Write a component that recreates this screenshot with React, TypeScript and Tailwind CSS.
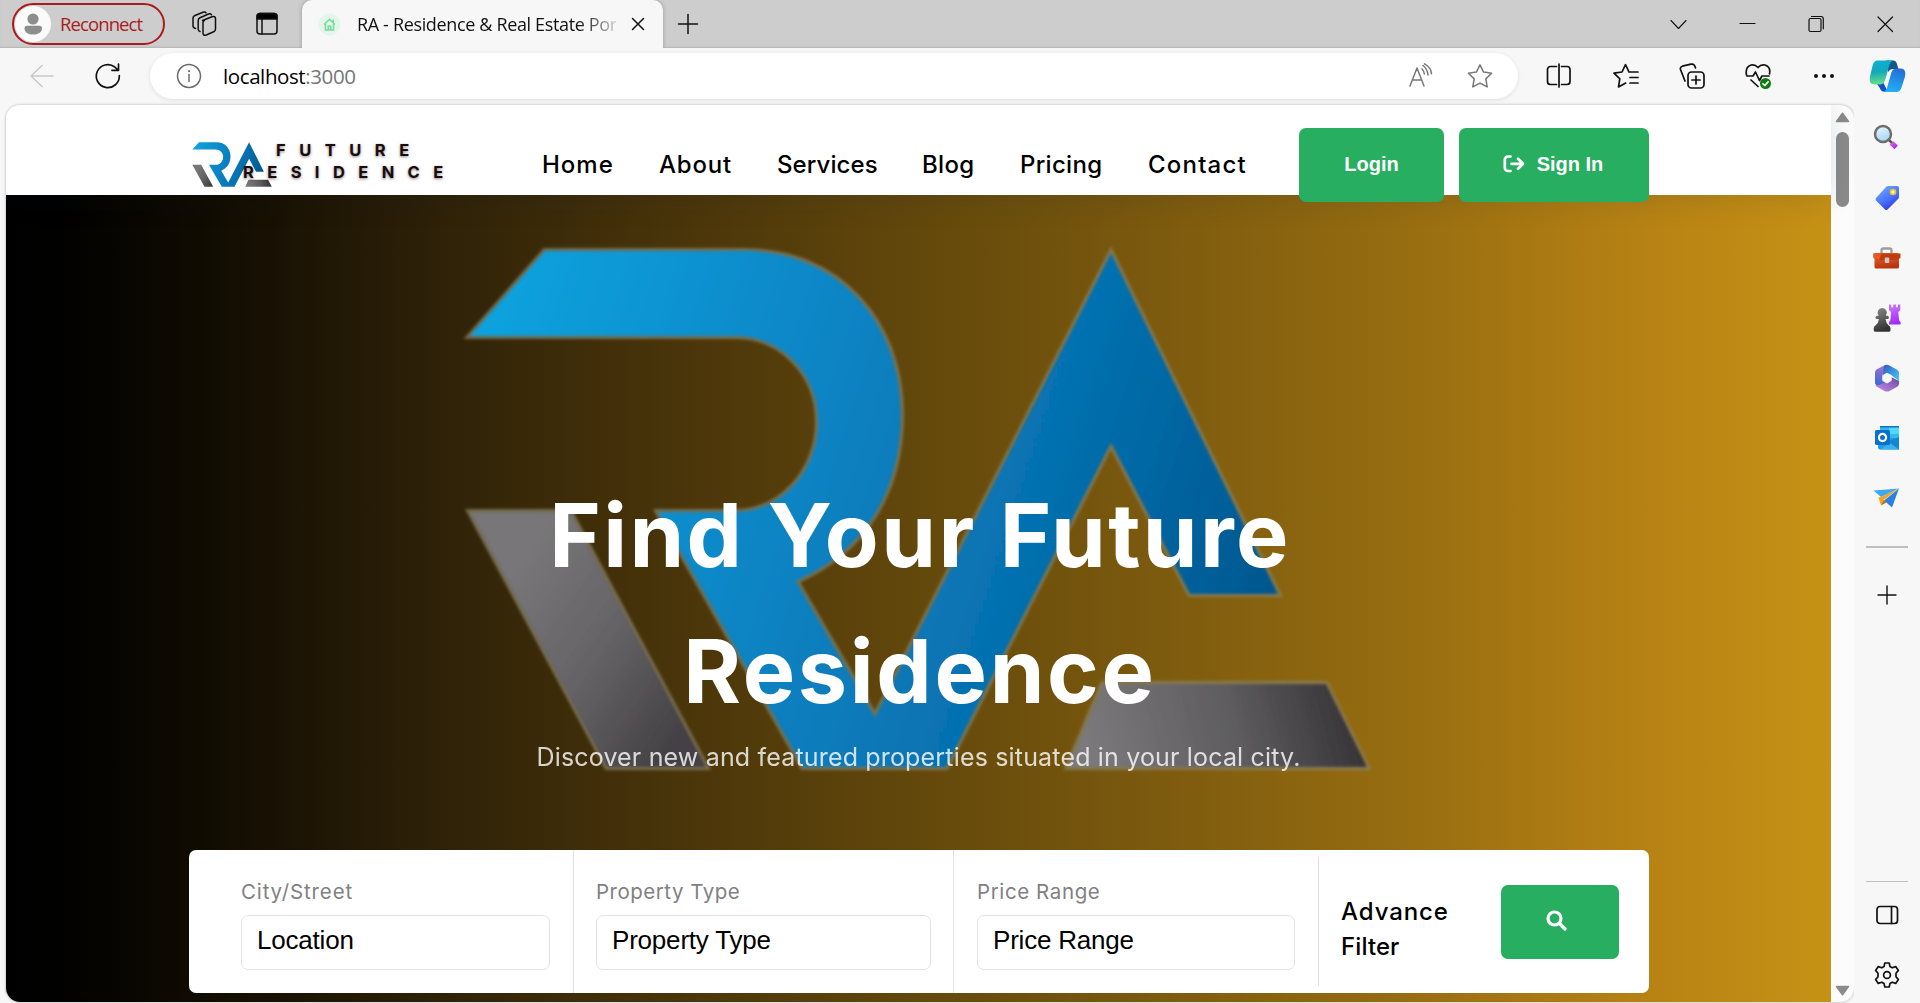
import type { ReactNode } from "react";

const LOGO_BLUE =
  "M545 251H745C838 251 901 322 901 414C901 490 866 550 796 581L875 717L1111 253L1278 594H1190L1111 443L946 767H803L658 512H735C782 512 818 470 818 422C818 374 782 336 735 336H470Z";
const LOGO_GRAY_LEFT = "M470 512H570L706 767H607Z";
const LOGO_GRAY_RIGHT = "M1103 684H1326L1367 767H1068Z";

function RaLogo({ id, className, soft }: { id: string; className: string; soft?: boolean }) {
  const paths = (
    <>
      <path d={LOGO_GRAY_LEFT} fill={`url(#${id}-g1)`} />
      <path d={LOGO_GRAY_RIGHT} fill={`url(#${id}-g2)`} />
      <path d={LOGO_BLUE} fill={`url(#${id}-b)`} />
    </>
  );
  return (
    <svg viewBox="455 238 926 542" preserveAspectRatio="none" className={className}>
      <defs>
        <linearGradient id={`${id}-b`} gradientUnits="userSpaceOnUse" x1="470" y1="300" x2="1280" y2="560">
          <stop offset="0" stopColor="#10a4e0" />
          <stop offset="0.35" stopColor="#0b89c9" />
          <stop offset="0.7" stopColor="#0671b0" />
          <stop offset="1" stopColor="#03578f" />
        </linearGradient>
        <linearGradient id={`${id}-g1`} gradientUnits="userSpaceOnUse" x1="500" y1="590" x2="690" y2="720">
          <stop offset="0" stopColor="#787678" />
          <stop offset="0.5" stopColor="#656366" />
          <stop offset="1" stopColor="#444144" />
        </linearGradient>
        <linearGradient id={`${id}-g2`} gradientUnits="userSpaceOnUse" x1="1090" y1="760" x2="1350" y2="690">
          <stop offset="0" stopColor="#7b797b" />
          <stop offset="0.55" stopColor="#5e5c5f" />
          <stop offset="1" stopColor="#363336" />
        </linearGradient>
        <filter id={`${id}-f`} x="-5%" y="-5%" width="110%" height="110%">
          <feGaussianBlur stdDeviation="1.5" />
        </filter>
      </defs>
      {soft ? (
        <>
          <g filter={`url(#${id}-f)`} fill="none" stroke="#8b8468" strokeOpacity="0.7" strokeWidth="6">
            <path d={LOGO_GRAY_LEFT} />
            <path d={LOGO_GRAY_RIGHT} />
            <path d={LOGO_BLUE} />
          </g>
          <g filter={`url(#${id}-f)`}>{paths}</g>
        </>
      ) : (
        paths
      )}
    </svg>
  );
}

function Line({ size = 26, w = 1.5, color = "#111", className = "", children }: { size?: number; w?: number; color?: string; className?: string; children: ReactNode }) {
  return (
    <svg width={size} height={size} viewBox="0 0 26 26" fill="none" stroke={color} strokeWidth={w} strokeLinecap="round" strokeLinejoin="round" className={`shrink-0 ${className}`}>
      {children}
    </svg>
  );
}

function TabStrip() {
  return (
    <div className="flex h-12 items-center bg-[#cdcdcd] shadow-[inset_0_-2px_2px_-1px_#b3b3b3]">
      <div className="ml-3 flex h-[42px] w-[153px] shrink-0 items-center rounded-full border-2 border-[#a81c1f] pl-px">
        <svg width="36" height="36" viewBox="0 0 36 36">
          <circle cx="18" cy="18" r="18" fill="#fafafa" />
          <circle cx="18" cy="13" r="5.6" fill="#8d8d8d" />
          <path d="M12 19.700h12.500a2.500 2.500 0 0 1 2.500 2.500c0 4-4 6.300-9 6.300s-8.500-2.300-8.500-6.300a2.500 2.500 0 0 1 2.500-2.500z" fill="#8d8d8d" />
        </svg>
        <span className="ml-[9px] text-[18.500px] leading-[26px] tracking-[-0.900px] text-[#a81c1f]">Reconnect</span>
      </div>
      <Line className="ml-[26px]" size={26}>
        <path d="M11.500 9.500l9.500-3.700q3.500-1 3.500 1.800v10.500q0 2-1.800 2.700l-7.500 3.200q-3.200 1-3.200-2V11.500q0-1.500 1.500-2" />
        <path d="M9 20.500q-1.800-.5-1.800-2.500V9.500q0-2 1.800-2.800l8.500-3.700q2-.7 3 .7" />
        <path d="M4.500 17.500q-2.500-.5-2.500-3V7.300q0-2 2-2.800L12 1.200q2-.8 3 .6" />
      </Line>
      <Line className="ml-[37px]" size={26}>
        <path d="M3 8V5.500A3 3 0 0 1 6 2.500h14a3 3 0 0 1 3 3V8z" fill="#000" />
        <rect x="3" y="2.500" width="20" height="20.500" rx="3" />
        <path d="M8 8v15" />
      </Line>
      <div className="ml-[22px] flex h-12 w-[361px] shrink-0 items-center rounded-t-[10px] bg-[#f7f7f7] shadow-[0_0_4px_rgba(0,0,0,0.25)] [clip-path:inset(-4px_-4px_0_-4px)]">
        <svg width="23" height="23" viewBox="0 0 23 23" className="ml-[16px] shrink-0">
          <circle cx="11.500" cy="11.500" r="11" fill="#e4f6ea" />
          <path d="M6 11.500L11.500 6.300 17 11.500M7.500 11v6h8v-6M10.300 17v-4h2.400v4M15.300 9V6.500" fill="none" stroke="#79dc9f" strokeWidth="1.600" />
        </svg>
        <span className="ml-[16px] w-[259px] overflow-hidden bg-gradient-to-r from-[#111] from-85% to-[#cfcfcf] bg-clip-text text-[18px] leading-[26px] tracking-[-0.350px] whitespace-nowrap text-transparent">
          RA - Residence &amp; Real Estate Por
        </span>
        <Line className="ml-[9px]" size={26}>
          <path d="M7.500 7.500l11 11M18.500 7.500l-11 11" />
        </Line>
      </div>
      <Line className="ml-[12px]" size={26}>
        <path d="M13 3.500v19M3.500 13h19" />
      </Line>
      <div className="flex-1" />
      <div className="mr-[22px] flex items-center gap-[43px]">
        <Line w={1.1}><path d="M6 9.500l7.500 8 7.500-8" /></Line>
        <Line w={1.2}><path d="M6 12.500h15" /></Line>
        <Line w={1.2}>
          <rect x="6" y="7.500" width="12" height="13" rx="1.500" />
          <path d="M8.500 5.500h9.500a2.300 2.300 0 0 1 2.300 2.300v10" />
        </Line>
        <Line w={1.2}><path d="M6 6l14.500 14.500M20.500 6L6 20.500" /></Line>
      </div>
    </div>
  );
}

function CopilotIcon() {
  return (
    <svg width="38" height="34" viewBox="0 0 38 34">
      <defs>
        <linearGradient id="cp1" x1="0" y1="0" x2="0.1" y2="1">
          <stop offset="0" stopColor="#0bb0d6" /><stop offset="0.5" stopColor="#15a8b8" /><stop offset="1" stopColor="#63df8b" />
        </linearGradient>
        <linearGradient id="cp2" x1="0.5" y1="0" x2="0.2" y2="1">
          <stop offset="0" stopColor="#2471d8" /><stop offset="1" stopColor="#1fb6fa" />
        </linearGradient>
      </defs>
      <path d="M18 1.500h7q3 0 3.800 3l1.700 5.500h-6q-3 0-4 3.500z" fill="#14578c" />
      <path d="M9 25l6-2 5 10h-2q-5 0-6.500-4.500z" fill="#1250cb" />
      <path d="M9.500 1.500H26q-3.500 .5-4.500 4L17.500 20q-1.500 5.500-6 5.500H6.500q-6 0-4.500-8L4.500 7q1.200-5.500 5-5.500z" fill="url(#cp1)" />
      <path d="M28.500 33H14q4-.5 5-4l4.200-15q1.300-4.500 5.500-4.500h3.800q6 0 4.500 8L34 27q-1.500 6-5.500 6z" fill="url(#cp2)" />
      <path d="M21.300 11.500h3q-1.500 1-2 3l-2 7q-.8 2.500-4 3l1.700-4.500z" fill="#f7f7f7" />
    </svg>
  );
}

function Toolbar() {
  return (
    <div className="flex h-14 shrink-0 items-center bg-[#f7f7f7]">
      <Line className="ml-[29px]" color="#c9c9c9" size={26}><path d="M24 13H2M13 2.500L2 13l11 10.500" /></Line>
      <Line className="ml-[40px]" size={26} w={1.700}>
        <path d="M24.300 12.500A11.500 11.500 0 1 1 19.800 4l3 2.800M23.500 1v6.300h-6.500" />
      </Line>
      <div className="ml-[29px] flex h-[46px] w-[1368px] shrink-0 items-center rounded-full bg-white shadow-[0_1px_4px_rgba(0,0,0,0.1)]">
        <Line className="ml-[26px]" color="#6b6b6b" size={26}>
          <circle cx="13" cy="13" r="11.500" /><path d="M13 11.500v7" /><path d="M13 8v.2" strokeWidth="2" />
        </Line>
        <span className="ml-[21px] text-[20.500px] leading-[28px] tracking-[-0.400px] text-black">localhost<span className="text-[#767676]">:3000</span></span>
        <div className="flex-1" />
        <Line color="#777" size={26}>
          <path d="M2 23L9 5l7 18M4.500 17h9M15 2.500q4.500 3.500 5 9.500M16.500 .8q6.500 3.500 7 10M14 6q2 2 2.300 5" />
        </Line>
        <Line className="mr-[25px] ml-[33px]" color="#777" size={26}>
          <path d="M13 1.800l3.600 7.300 8 1.200-5.800 5.600 1.400 8L13 20.100l-7.200 3.800 1.400-8L1.400 10.300l8-1.200z" />
        </Line>
      </div>
      <div className="ml-[28px] flex items-center gap-[40px]">
        <Line w={1.700}><path d="M10.500 3.500H4.500a3 3 0 0 0-3 3v12a3 3 0 0 0 3 3h6M15.500 3.500h5.500a3 3 0 0 1 3 3v12a3 3 0 0 1-3 3h-5.500M13 1v23" /></Line>
        <Line className="ml-px" w={1.700}><path d="M16 9l-3.500-7.300L9 9 1 10.200l5.800 5.600L5.500 24l7.200-3.900M16.500 9H25M17 14.500h8M17 20h8" /></Line>
        <Line w={1.700}><rect x="9" y="9" width="16" height="16" rx="3.500" /><path d="M17 13v8M13 17h8M6 18L1.500 6.500Q.8 4 3.300 3.200L12 1.200q3-.7 4 2.300l.5 1.500" /></Line>
        <Line w={1.700}>
          <path d="M1.500 12Q0 4 6 2q4-1 7 2.500Q16 1 20 2q6 2 4.500 9M2 13h6l2.500-4 4 8.500 2.500-4.500h7M6 17l7 6.500" />
          <circle cx="20.500" cy="20.500" r="5.500" fill="#107c10" stroke="none" /><path d="M18 20.800l1.800 1.700 3.300-3.600" stroke="#fff" />
        </Line>
        <Line><g fill="#111" stroke="none"><circle cx="5" cy="13" r="2" /><circle cx="13" cy="13" r="2" /><circle cx="21" cy="13" r="2" /></g></Line>
      </div>
      <div className="ml-[31px]"><CopilotIcon /></div>
    </div>
  );
}

function Sidebar() {
  return (
    <div className="flex w-[66px] shrink-0 flex-col items-center bg-[#f7f7f7] pt-[18px]">
      <svg className="h-[30px] w-[30px] shrink-0" viewBox="0 0 30 30">
        <defs>
          <linearGradient id="mg" x1="0" y1="0" x2="0.4" y2="1"><stop offset="0" stopColor="#eef8ff" /><stop offset="1" stopColor="#a7d8f2" /></linearGradient>
          <linearGradient id="mh" x1="0" y1="0" x2="1" y2="1"><stop offset="0" stopColor="#f04de0" /><stop offset="1" stopColor="#9a35f2" /></linearGradient>
        </defs>
        <path d="M17 18l4 4" stroke="#555" strokeWidth="2.500" />
        <circle cx="11" cy="12" r="8" fill="url(#mg)" stroke="#6d6d6d" strokeWidth="2.500" />
        <path d="M19.500 21l4.700 4.300" stroke="url(#mh)" strokeWidth="5" />
      </svg>
      <svg className="mt-[31px] h-[30px] w-[30px] shrink-0" viewBox="0 0 30 30">
        <defs><linearGradient id="tg" x1="0.100" y1="0" x2="0.700" y2="1"><stop offset="0" stopColor="#73b2ff" /><stop offset="0.600" stopColor="#4671fb" /><stop offset="1" stopColor="#3230e6" /></linearGradient></defs>
        <path d="M16 3h9q2 0 2 2v9q0 1-1 2L15.500 26.500q-1.500 1-2.500 0l-9-9q-1-1.500 0-2.500L14 4q1-1 2-1z" fill="url(#tg)" />
        <circle cx="21" cy="9" r="2.400" fill="#fff" stroke="#f5c322" strokeWidth="1.800" />
      </svg>
      <svg className="mt-[31px] h-[30px] w-[30px] shrink-0" viewBox="0 0 30 30">
        <defs><linearGradient id="bx" x1="0" y1="0" x2="0.200" y2="1"><stop offset="0" stopColor="#ee6b2c" /><stop offset="1" stopColor="#b9330f" /></linearGradient></defs>
        <path d="M9.500 10V6.500q0-2 2-2h6q2 0 2 2V10" fill="none" stroke="#9e9e9e" strokeWidth="2.300" />
        <rect x="2.500" y="9" width="24.500" height="15.500" rx="1.500" fill="url(#bx)" />
        <path d="M1.500 9.500h27v4.500q-3 2-7 2h-13q-4 0-7-2z" fill="#c23c12" />
        <path d="M1.500 9.500h8l-2 6q-3.500-.3-6-1.500z" fill="#e55a20" />
        <rect x="12.800" y="13.500" width="4.400" height="5.500" rx="1" fill="#c9c9c9" />
      </svg>
      <svg className="mt-[29px] h-[30px] w-[30px] shrink-0" viewBox="0 0 30 30">
        <defs>
          <linearGradient id="pw" x1="0" y1="0" x2="0.300" y2="1"><stop offset="0" stopColor="#8a8a8a" /><stop offset="0.500" stopColor="#626262" /><stop offset="1" stopColor="#333" /></linearGradient>
          <linearGradient id="rk" x1="0" y1="0" x2="0.200" y2="1"><stop offset="0" stopColor="#d07bff" /><stop offset="1" stopColor="#a32cf2" /></linearGradient>
        </defs>
        <path d="M17 1.500h2.200v2.800h2V1.500h2.800v2.800h2V1.500h2.300v5.500l-2 2 .8 8.500 1.500 1.500v2.500H17v-2.500l1.300-1.500.8-8.500-2.100-2z" fill="url(#rk)" />
        <path d="M10.200 5a4.700 4.700 0 0 1 3.600 7.700h1.400a1.700 1.700 0 0 1 0 3.400h-1.700q.5 4.300 3 6.200 2 1 2 3.200v1.700q0 1.500-1.800 1.500h-13q-2 0-2-1.500v-1.700q0-2.200 2-3.200 2.700-1.900 3.200-6.200H5.200a1.700 1.700 0 0 1 0-3.400h1.400A4.700 4.700 0 0 1 10.200 5z" fill="url(#pw)" />
      </svg>
      <svg className="mt-[30px] h-[30px] w-[30px] shrink-0" viewBox="0 0 30 30">
        <defs>
          <linearGradient id="o1" x1="0.500" y1="0" x2="0.300" y2="1"><stop offset="0" stopColor="#a56fd1" /><stop offset="1" stopColor="#316cd3" /></linearGradient>
          <linearGradient id="o2" x1="0" y1="0" x2="1" y2="0.800"><stop offset="0" stopColor="#3158bd" /><stop offset="1" stopColor="#42c2f7" /></linearGradient>
          <linearGradient id="o3" x1="0" y1="1" x2="1" y2="0"><stop offset="0" stopColor="#c88bec" /><stop offset="1" stopColor="#69479d" /></linearGradient>
        </defs>
        <path d="M12 2.500L4.500 6.500Q3 7.500 3 9.500v11q2 3 4.500 2.500Q13 22 14 18l-3.500-5.500q0-2 1.500-3z" fill="url(#o1)" />
        <path d="M12 2.500q3-1.500 5.500 0l8 4.500Q27 8 27 10v8l-8.500-6.500Q15.500 12 10.500 14z" fill="url(#o2)" />
        <path d="M18 13.500l9 4.500v2.500q0 2-1.500 3l-8 4.500q-2.500 1-5 0l-8-4.500q-1-1-1.300-2 3 1.500 6.300-.5l8-4q1-1.500 .5-3.500z" fill="url(#o3)" />
        <path d="M15 10.300l4.200 2.300v5L15 20l-4.200-2.400v-5z" fill="#f7f7f7" stroke="#f7f7f7" strokeWidth="1" strokeLinejoin="round" />
      </svg>
      <svg className="mt-[30px] h-[30px] w-[30px] shrink-0" viewBox="0 0 30 30">
        <path d="M8 3h19v12H8z" fill="#35b8f1" /><path d="M17 3h10v8H17z" fill="#50d9ff" />
        <path d="M8 3h19v1.500H8z" fill="#0f6fc0" />
        <path d="M6 15h21v11.500H8q-2 0-2-2z" fill="#1f9de8" />
        <path d="M27 14v12.500L14 19z" fill="#1686d0" /><path d="M8 26.500h19L18 20z" fill="#38b2f0" />
        <rect x="3" y="7" width="15" height="15" rx="1.500" fill="#0b6fcd" />
        <circle cx="10.500" cy="14.500" r="3.600" fill="none" stroke="#fff" strokeWidth="2.200" />
      </svg>
      <svg className="mt-[30px] h-[30px] w-[30px] shrink-0" viewBox="0 0 30 30">
        <path d="M1.500 7.500L27 5.500 9 14z" fill="#42a8ee" />
        <path d="M27 5.500L20 24.500l-8-7z" fill="#2b80e0" />
        <path d="M9 14L27 5.500 11.500 17 9 22.500l-2.500-8z" fill="#f2a51d" /><path d="M11.500 17l3 2.500-5.500 3z" fill="#b87410" />
      </svg>
      <div className="mt-[33px] h-[2px] w-[42px] shrink-0 bg-[#bfbfbf]" />
      <Line className="mt-[34px]" w={1.4}><path d="M13 4v18M4 13h18" /></Line>
      <div className="flex-1" />
      <div className="h-px w-[42px] bg-[#bfbfbf]" />
      <Line className="mt-[20px]" w={1.700}><rect x="3" y="4.500" width="20.500" height="17" rx="3" /><path d="M17.500 4.500v17" /></Line>
      <svg className="mt-[33px] mb-[14px] h-[28px] w-[28px] shrink-0" viewBox="0 0 28 28" fill="none" stroke="#111" strokeWidth="1.700" strokeLinejoin="round">
        <path d="M11.800 2h4.400l.8 3.600 2.200 1.200 3.500-1.200 2.700 3.800-2.400 2.800v3.600l2.400 2.800-2.700 3.800-3.500-1.200-2.200 1.200-.8 3.600h-4.400l-.8-3.600-2.200-1.200-3.500 1.200-2.700-3.800L5 15.800v-3.600L2.600 9.400l2.700-3.800 3.500 1.200L11 5.600z" />
        <circle cx="14" cy="14" r="3.400" />
      </svg>
    </div>
  );
}

function SiteHeader() {
  const link = "shrink-0 whitespace-nowrap";
  return (
    <header className="relative z-10 flex h-[90px] shrink-0 bg-white font-['Inter',sans-serif] shadow-[0_5px_30px_rgba(0,30,60,0.12)]">
      <div className="relative mt-[36px] ml-[185px] h-[48px] w-[359px] shrink-0">
        <RaLogo id="small" className="h-[47px] w-[82px]" />
        <div className="absolute top-[-2px] left-[85px] text-[16.500px] leading-[22px] font-bold tracking-[13.500px] whitespace-nowrap text-[#1d0b0b] [text-shadow:0_1px_3px_rgba(0,0,0,0.5)]">FUTURE</div>
        <div className="absolute top-[20px] left-[52px] text-[16.500px] leading-[22px] font-bold tracking-[13.400px] whitespace-nowrap text-[#1d0b0b] [text-shadow:0_1px_3px_rgba(0,0,0,0.5)]">RESIDENCE</div>
      </div>
      <nav className="mt-[42px] ml-[-8px] flex h-[36px] items-center text-[24px] font-medium text-black">
        <a className={`${link} w-[117px] tracking-[1px]`}>Home</a>
        <a className={`${link} w-[118px] tracking-[0.800px]`}>About</a>
        <a className={`${link} w-[145px] tracking-[0.100px]`}>Services</a>
        <a className={`${link} w-[98px] tracking-[0.300px]`}>Blog</a>
        <a className={`${link} w-[128px] tracking-[0.300px]`}>Pricing</a>
        <a className={`${link} w-[151px] tracking-[1.200px]`}>Contact</a>
      </nav>
      <div className="mt-[23px] flex gap-[15px] font-['Liberation_Sans',sans-serif] text-[20px] font-bold text-white">
        <button className="flex h-[74px] w-[145px] items-center justify-center rounded-[7px] bg-[#27ae60] pb-[2px]">Login</button>
        <button className="flex h-[74px] w-[190px] items-center justify-center rounded-[7px] bg-[#27ae60] pr-[2px] pb-[2px]">
          <svg width="22" height="20" viewBox="0 0 22 20" fill="none" stroke="#fff" strokeWidth="2.700" strokeLinecap="round" strokeLinejoin="round" className="mr-3">
            <path d="M7.500 2.500H5A3.200 3.200 0 0 0 1.800 5.700v8.100A3.200 3.200 0 0 0 5 17h2.500M8.500 9.800h11M15 4.800l5 5-5 5" />
          </svg>
          Sign In
        </button>
      </div>
    </header>
  );
}

function Field({ label, value, width, tracking }: { label: string; value: string; width: string; tracking: string }) {
  return (
    <div className={width}>
      <div className={`font-['Inter',sans-serif] text-[20.500px] leading-[30px] text-[#818181] ${tracking}`}>{label}</div>
      <div className="mt-[8px] flex h-[55px] items-center rounded-[7px] border border-[#e3e3e3] pb-[4px] pl-[15px] text-[26px] tracking-[-0.200px] text-black">{value}</div>
    </div>
  );
}

function Hero() {
  return (
    <section className="relative flex min-h-0 flex-1 flex-col bg-[linear-gradient(to_right,#000_0%,#010100_3%,#171003_14%,#2f2208_24%,#4a350a_37%,#674b0c_52%,#916910_74%,#b78214_90%,#c69215_100%)]">
      <div className="absolute top-[43px] left-[449px]">
        <RaLogo id="big" className="h-[542px] w-[926px]" soft />
      </div>
      <div className="relative mt-[272px] flex flex-col items-center text-center font-['Inter',sans-serif] text-white">
        <h1 className="w-[900px] pl-[3px] text-[88px] leading-[136px] font-bold">
          <span className="tracking-[2.400px]">Find Your Future</span>
          <br />
          <span className="tracking-[2.700px]">Residence</span>
        </h1>
        <p className="mt-[1px] text-[25px] leading-[34px] tracking-[0.170px] whitespace-nowrap opacity-80">
          Discover new and featured properties situated in your local city.
        </p>
      </div>
      <form className="relative mt-[76px] ml-[183px] flex h-[143px] w-[1460px] rounded-[7px] bg-white font-['Liberation_Sans',sans-serif]">
        <div className="flex w-[385px] border-r border-[#e3e3e3] pt-[27px] pl-[52px]"><Field label="City/Street" value="Location" width="w-[309px]" tracking="tracking-[0.850px]" /></div>
        <div className="flex w-[380px] border-r border-[#e3e3e3] pt-[27px] pl-[22px]"><Field label="Property Type" value="Property Type" width="w-[335px]" tracking="tracking-[0.500px]" /></div>
        <div className="flex w-[364px] pt-[27px] pl-[23px]"><Field label="Price Range" value="Price Range" width="w-[318px]" tracking="tracking-[0.600px]" /></div>
        <div className="my-[7px] flex flex-1 items-center border-l border-[#dedede] pl-[22px]">
          <div className="w-[160px] pt-[14px] font-['Inter',sans-serif] text-[24px] leading-[35px] font-medium text-black">
            <div className="tracking-[0.900px]">Advance</div>
            <div className="tracking-[0.100px]">Filter</div>
          </div>
          <button className="flex h-[74px] w-[118px] items-center justify-center rounded-[7px] bg-[#27ae60] pr-[8px] pb-[2px]">
            <svg width="21" height="21" viewBox="0 0 21 21" fill="none" stroke="#fff" strokeWidth="3.200" strokeLinecap="round">
              <circle cx="8.500" cy="8.500" r="6.500" /><path d="M13.500 13.500l5.500 5.500" />
            </svg>
          </button>
        </div>
      </form>
    </section>
  );
}

export default function App() {
  return (
    <div className="flex h-[1003px] w-[1920px] flex-col overflow-hidden bg-[#f7f7f7] font-['Open_Sans','Noto_Sans',sans-serif]">
      <TabStrip />
      <Toolbar />
      <div className="flex min-h-0 flex-1">
        <div className="mt-px mb-px ml-[6px] flex w-[1848px] shrink-0 overflow-hidden rounded-[14px] bg-[#fcfcfc] shadow-[0_0_3px_rgba(0,0,0,0.3)]">
          <div className="flex w-[1825px] shrink-0 flex-col">
            <SiteHeader />
            <Hero />
          </div>
          <div className="flex flex-1 flex-col items-center justify-between pt-[7px] pb-[6px]">
            <div className="flex flex-col items-center">
              <svg width="15" height="11" viewBox="0 0 15 11"><path d="M7.500 1.200L13.500 9.500h-12z" fill="#8b8b8b" stroke="#8b8b8b" strokeWidth="1.500" strokeLinejoin="round" /></svg>
              <div className="mt-[9px] h-[75px] w-[13px] rounded-full bg-[#8b8b8b]" />
            </div>
            <svg width="15" height="11" viewBox="0 0 15 11"><path d="M7.500 9.800L13.500 1.500h-12z" fill="#8b8b8b" stroke="#8b8b8b" strokeWidth="1.500" strokeLinejoin="round" /></svg>
          </div>
        </div>
        <Sidebar />
      </div>
    </div>
  );
}
